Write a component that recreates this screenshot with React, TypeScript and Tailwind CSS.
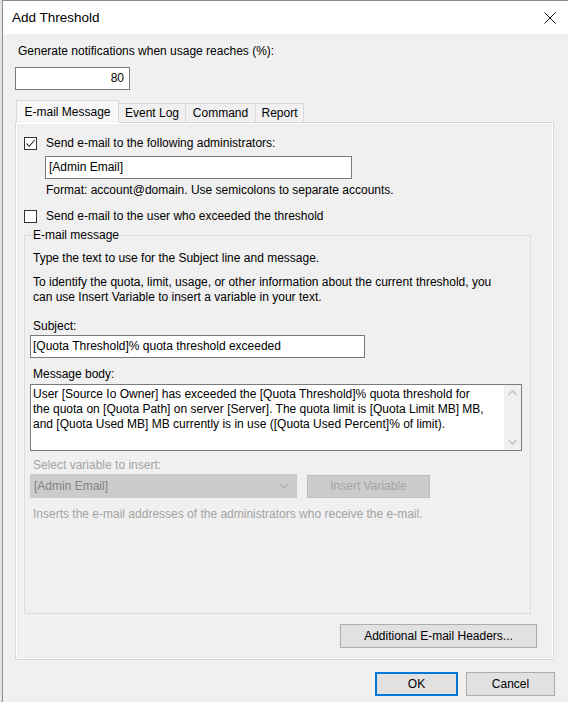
import React from "react";

function Check({ checked }: { checked?: boolean }) {
  return (
    <div className="w-[13px] h-[13px] border border-[#333333] bg-white flex items-center justify-center shrink-0">
      {checked && (
        <svg width="11" height="11" viewBox="0 0 11 11">
          <path d="M1.5 5.5 L4.2 8.3 L9.6 2.2" fill="none" stroke="#333333" strokeWidth="1.1" />
        </svg>
      )}
    </div>
  );
}

export default function App() {
  return (
    <div className="w-[568px] h-[702px] flex bg-[#f0f0f0] overflow-hidden text-black text-[12px] leading-[15px] font-['Liberation_Sans',Arial,sans-serif]">
      <div className="w-[2px] bg-[#e4e4e4] shrink-0" />
      <div className="flex-1 flex flex-col border-l border-t border-[#8c8c8c]">
        {/* Title bar */}
        <div className="h-[33px] bg-white flex items-center justify-between pl-[9px] pr-[12px] shrink-0">
          <span className="text-[13.5px] leading-[16px]">Add Threshold</span>
          <svg width="12" height="12" viewBox="0 0 12 12">
            <path d="M0.5 0.5 L11.5 11.5 M11.5 0.5 L0.5 11.5" stroke="#111" strokeWidth="1" />
          </svg>
        </div>

        {/* Body */}
        <div className="flex-1 flex flex-col pl-[12px] pr-[11px]">
          <div className="mt-[10px] ml-[3px]">Generate notifications when usage reaches (%):</div>
          <div className="mt-[8px] w-[115px] h-[23px] border border-[#7a7a7a] bg-white flex items-center justify-end pr-[5px]">
            80
          </div>

          {/* Tabs */}
          <div className="mt-[10px] flex items-end h-[23px] pl-[1px] -mb-[1px] relative z-10">
            <div className="w-[103px] h-[23px] border border-b-0 border-[#d9d9d9] bg-[#f7f7f7] flex items-center justify-center">
              E-mail Message
            </div>
            <div className="w-[67px] h-[20px] border border-l-0 border-[#d9d9d9] bg-[#f0f0f0] flex items-center justify-center pt-[1px]">
              Event Log
            </div>
            <div className="w-[70px] h-[20px] border border-l-0 border-[#d9d9d9] bg-[#f0f0f0] flex items-center justify-center pt-[1px]">
              Command
            </div>
            <div className="w-[48px] h-[20px] border border-l-0 border-[#d9d9d9] bg-[#f0f0f0] flex items-center justify-center pt-[1px]">
              Report
            </div>
          </div>

          {/* Panel */}
          <div className="w-[539px] h-[538px] border border-[#d9d9d9] shadow-[inset_0_0_0_1px_#ffffff] bg-[#f0f0f0] flex flex-col pl-[8px] pt-[13px]">
            <div className="flex items-center gap-[9px]">
              <Check checked />
              <span>Send e-mail to the following administrators:</span>
            </div>
            <div className="mt-[5px] ml-[21px] w-[307px] h-[23px] border border-[#7a7a7a] bg-white flex items-center pl-[3px]">
              [Admin Email]
            </div>
            <div className="mt-[4px] ml-[22px]">Format: account@domain. Use semicolons to separate accounts.</div>
            <div className="mt-[11px] flex items-center gap-[9px]">
              <Check />
              <span>Send e-mail to the user who exceeded the threshold</span>
            </div>

            <fieldset className="mt-[4px] w-[506px] h-[386px] border border-[#dcdcdc] px-[8px] flex flex-col">
              <legend className="px-0 leading-[15px]">E-mail message</legend>
              <div className="mt-[8px]">Type the text to use for the Subject line and message.</div>
              <div className="mt-[9px] leading-[15px]">
                To identify the quota, limit, usage, or other information about the current threshold, you
                <br />
                can use Insert Variable to insert a variable in your text.
              </div>
              <div className="mt-[14px]">Subject:</div>
              <div className="mt-[1px] -ml-[3px] w-[335px] h-[23px] border border-[#7a7a7a] bg-white flex items-center pl-[2px]">
                [Quota Threshold]% quota threshold exceeded
              </div>
              <div className="mt-[9px]">Message body:</div>
              <div className="mt-[2px] -ml-[3px] w-[492px] h-[67px] border border-[#7a7a7a] bg-white flex">
                <div className="flex-1 pl-[2px] pt-[2px] leading-[15px]">
                  User [Source Io Owner] has exceeded the [Quota Threshold]% quota threshold for
                  <br />
                  the quota on [Quota Path] on server [Server]. The quota limit is [Quota Limit MB] MB,
                  <br />
                  and [Quota Used MB] MB currently is in use ([Quota Used Percent]% of limit).
                </div>
                <div className="w-[17px] bg-[#f0f0f0] flex flex-col items-center justify-between py-[5px]">
                  <svg width="9" height="6" viewBox="0 0 9 6">
                    <path d="M0.5 5 L4.5 1 L8.5 5" fill="none" stroke="#c2c2c2" strokeWidth="1.3" />
                  </svg>
                  <svg width="9" height="6" viewBox="0 0 9 6">
                    <path d="M0.5 1 L4.5 5 L8.5 1" fill="none" stroke="#c2c2c2" strokeWidth="1.3" />
                  </svg>
                </div>
              </div>
              <div className="mt-[7px] text-[#a3a3a3]">Select variable to insert:</div>
              <div className="mt-[1px] -ml-[3px] flex items-center gap-[10px]">
                <div className="w-[267px] h-[24px] bg-[#cccccc] border border-[#cccccc] flex items-center justify-between pl-[3px] pr-[7px] text-[#838383]">
                  <span>[Admin Email]</span>
                  <svg width="10" height="6" viewBox="0 0 10 6">
                    <path d="M0.5 0.5 L5 5 L9.5 0.5" fill="none" stroke="#a8a8a8" strokeWidth="1.1" />
                  </svg>
                </div>
                <div className="w-[123px] h-[23px] bg-[#cccccc] border border-[#bfbfbf] flex items-center justify-center text-[#a3a3a3]">
                  Insert Variable
                </div>
              </div>
              <div className="mt-[9px] text-[#a3a3a3]">Inserts the e-mail addresses of the administrators who receive the e-mail.</div>
            </fieldset>

            <div className="mt-[10px] self-end mr-[16px] w-[197px] h-[24px] bg-[#e1e1e1] border border-[#adadad] flex items-center justify-center">
              Additional E-mail Headers...
            </div>
          </div>

          {/* Bottom buttons */}
          <div className="mt-[12px] flex justify-end gap-[8px] pr-[2px]">
            <div className="w-[83px] h-[24px] bg-[#e1e1e1] border-2 border-[#0078d7] flex items-center justify-center">
              OK
            </div>
            <div className="w-[89px] h-[24px] bg-[#e1e1e1] border border-[#adadad] flex items-center justify-center">
              Cancel
            </div>
          </div>
        </div>
      </div>
    </div>
  );
}
